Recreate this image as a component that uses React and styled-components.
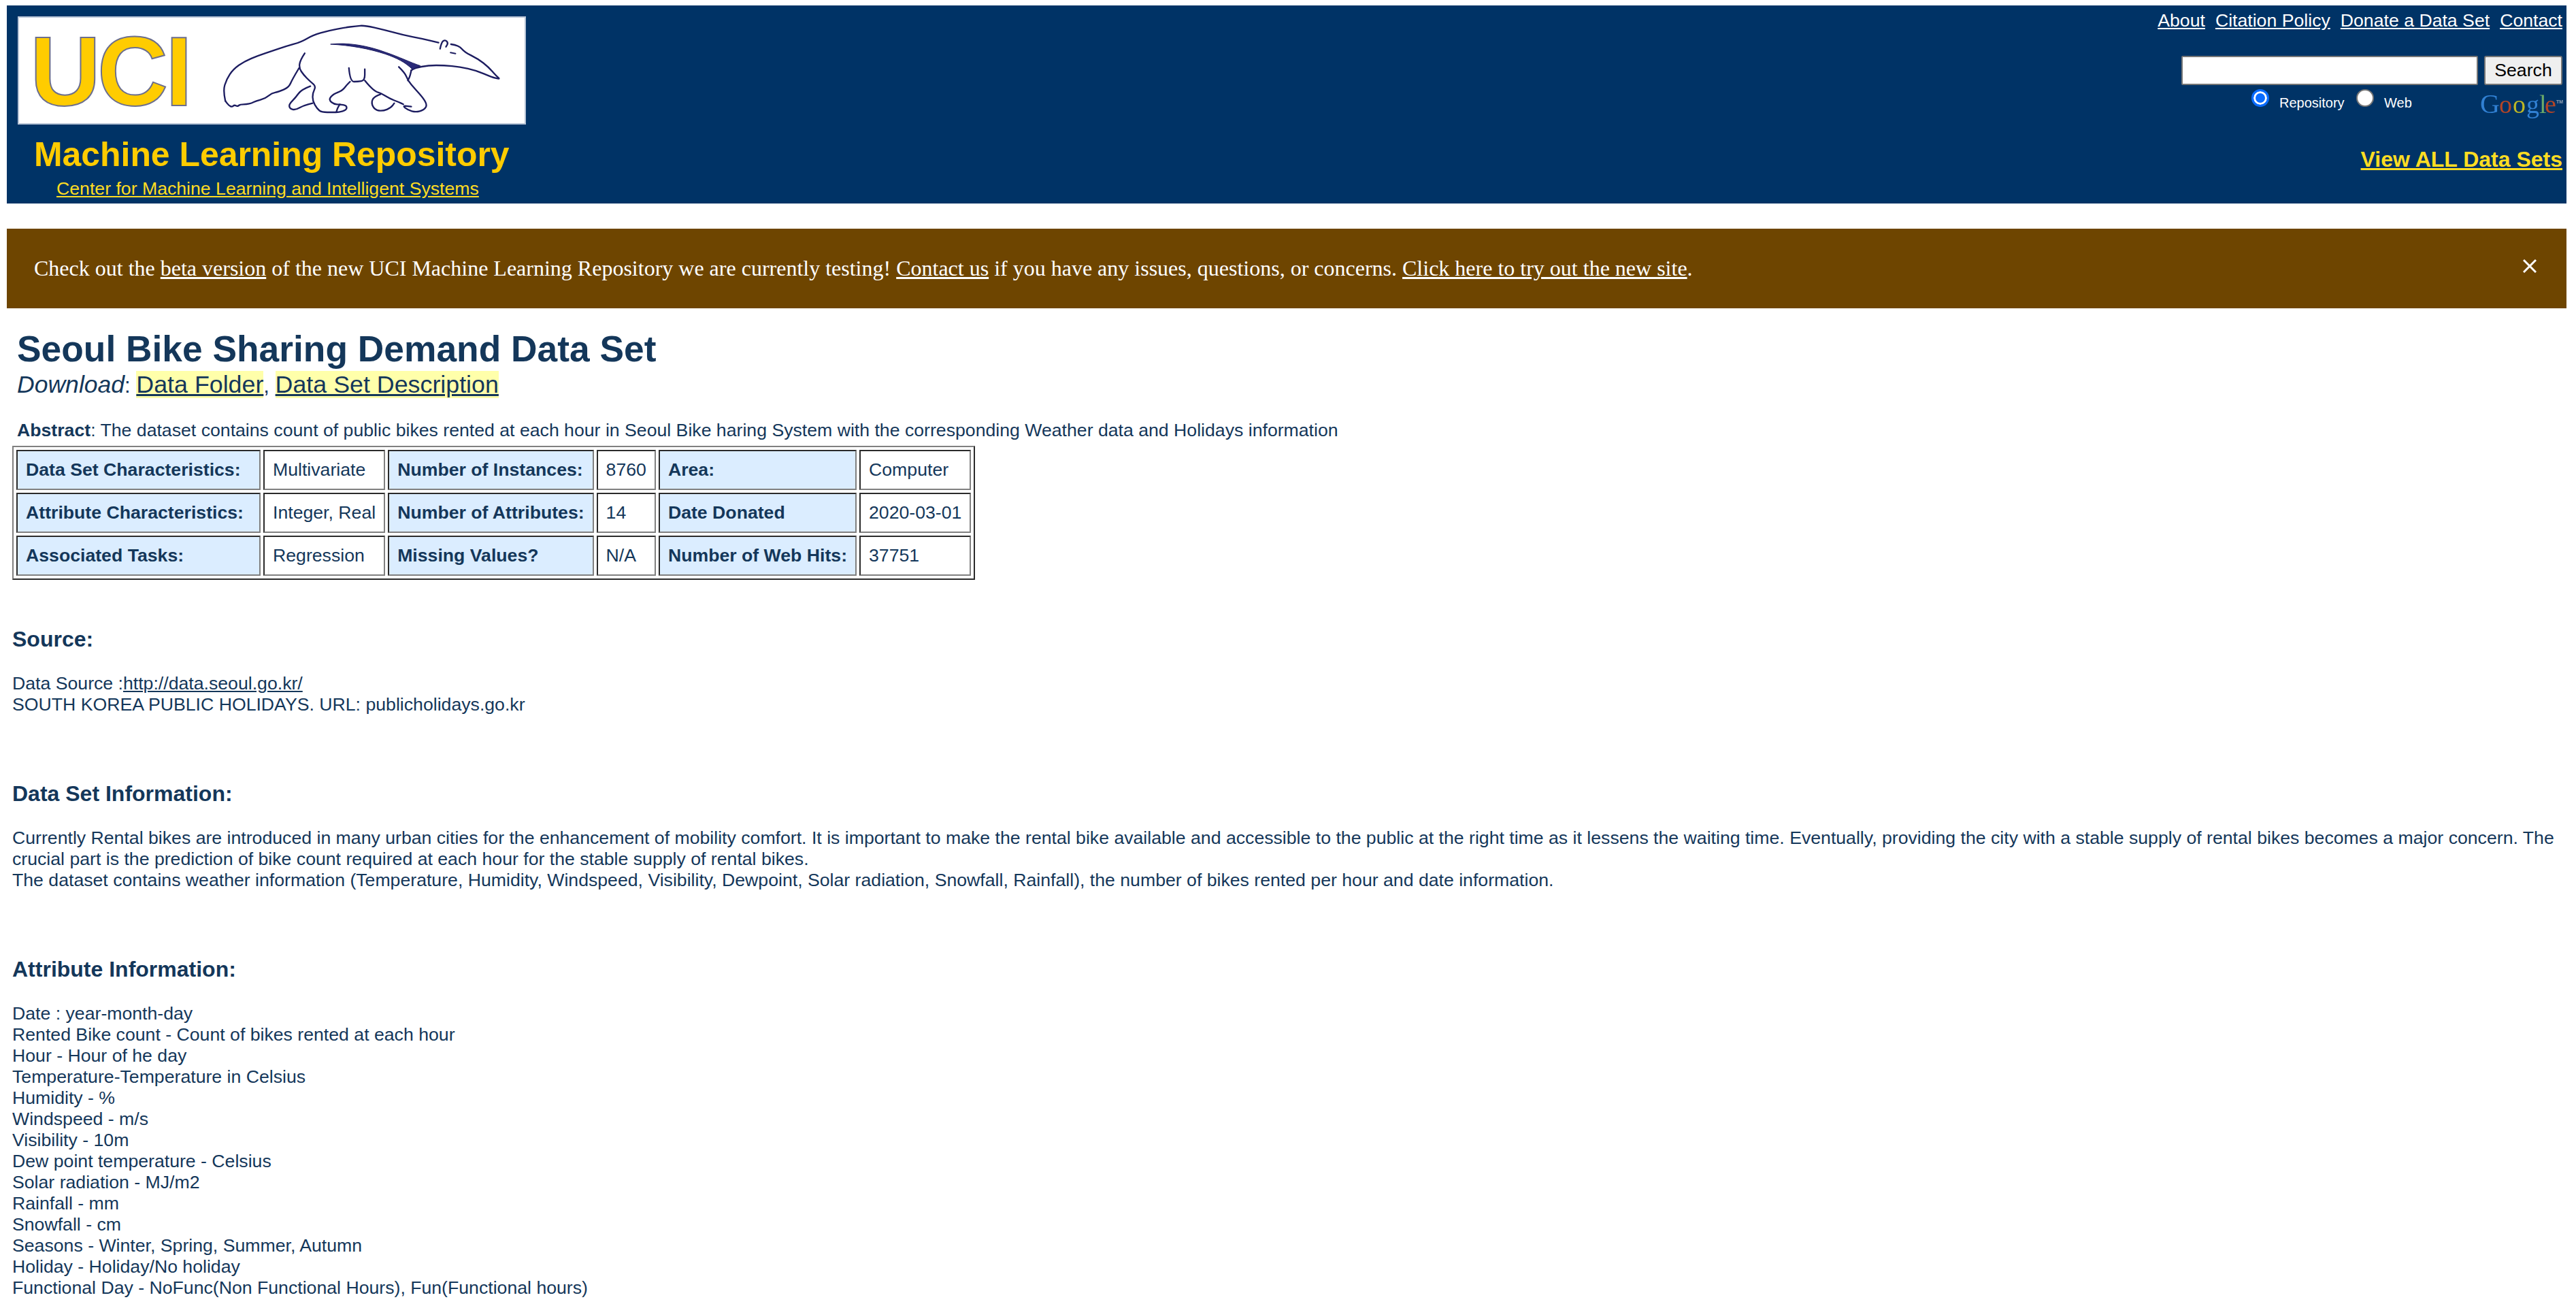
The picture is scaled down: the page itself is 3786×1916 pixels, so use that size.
import styled, { createGlobalStyle } from "styled-components";

const GlobalStyle = createGlobalStyle`
  html, body {
    margin: 0;
    padding: 0;
    background: #fff;
  }
  body {
    font-family: "Liberation Sans", Arial, sans-serif;
    color: #14375a;
  }
`;

const Page = styled.div`
  width: 3762px;
  height: 1908px;
  margin: 8px 14px 0 10px;
  overflow: hidden;
`;

const Header = styled.header`
  display: flex;
  justify-content: space-between;
  height: 291px;
  padding: 0 6px 0 16px;
  box-sizing: border-box;
  background: #003366;
`;

const Brand = styled.div`
  display: flex;
  flex-direction: column;
  width: 747px;
  padding-top: 16px;
`;

const LogoBox = styled.div`
  width: 747px;
  height: 159px;
  box-sizing: border-box;
  border: 2px solid #b8c4d6;
  background: #fff;
  svg {
    display: block;
    filter: blur(0.5px);
  }
`;

const RepoTitle = styled.div`
  margin-top: 16px;
  padding-left: 24px;
  font-size: 49.9px;
  line-height: 56px;
  font-weight: 700;
  color: #ffcc00;
  white-space: nowrap;
`;

const CenterLink = styled.a`
  margin-top: 6px;
  padding-left: 57px;
  font-size: 26.67px;
  line-height: 32px;
  color: #ffdd22;
  text-decoration: underline;
  white-space: nowrap;
`;

const Tools = styled.div`
  display: flex;
  flex-direction: column;
  align-items: flex-end;
  padding-top: 6px;
`;

const TopNav = styled.nav`
  display: flex;
  gap: 15px;
`;

const NavLink = styled.a`
  font-size: 26.67px;
  line-height: 32px;
  color: #fff;
  text-decoration: underline;
`;

const SearchRow = styled.div`
  display: flex;
  gap: 9px;
  margin-top: 36px;
`;

const SearchInput = styled.input`
  width: 436px;
  height: 43px;
  box-sizing: border-box;
  border: 2px solid #767676;
  border-radius: 2px;
  background: #fff;
`;

const SearchButton = styled.button`
  width: 115px;
  height: 43px;
  padding: 0;
  box-sizing: border-box;
  border: 2px solid #767676;
  border-radius: 3px;
  background: #efefef;
  color: #000;
  font-family: "Liberation Sans", Arial, sans-serif;
  font-size: 26.67px;
`;

const RadioRow = styled.div`
  display: flex;
  align-items: flex-start;
  width: 560px;
  margin-top: 6px;
  padding-left: 103px;
  box-sizing: border-box;
`;

const RadioDot = styled.span`
  flex: none;
  width: 26px;
  height: 26px;
  box-sizing: border-box;
  border-radius: 50%;
  background: ${(p) => (p.$on ? "#0a6cff" : "#fff")};
  border: ${(p) => (p.$on ? "3px solid #0a6cff" : "2px solid #767676")};
  box-shadow: ${(p) => (p.$on ? "inset 0 0 0 3px #fff" : "none")};
`;

const RadioLabel = styled.span`
  width: ${(p) => p.$w}px;
  margin: 7px 0 0 15px;
  font-size: 20px;
  line-height: 26px;
  color: #fff;
`;

const GoogleMark = styled.svg`
  flex: none;
  margin: 8px -1px 0 auto;
  overflow: visible;
  opacity: 0.85;
  filter: blur(0.4px);
`;

const AllSets = styled.a`
  margin-top: 34px;
  font-size: 32px;
  line-height: 38px;
  font-weight: 700;
  color: #ffdd22;
  text-decoration: underline;
`;

const Banner = styled.div`
  display: flex;
  justify-content: space-between;
  align-items: center;
  height: 117px;
  margin-top: 37px;
  padding: 0 44px 0 40px;
  box-sizing: border-box;
  background: #6e4500;
  color: #fff;
  font-family: "Liberation Serif", "Times New Roman", serif;
  font-size: 32px;
`;

const BannerLink = styled.a`
  color: #fff;
  text-decoration: underline;
`;

const CloseIcon = styled.svg`
  flex: none;
  align-self: flex-start;
  margin-top: 45px;
`;

const Main = styled.main`
  padding: 30px 8px 0;
`;

const Title = styled.h1`
  margin: 0;
  padding-left: 7px;
  font-size: 53.33px;
  line-height: 60px;
  font-weight: 700;
`;

const DownloadLine = styled.div`
  padding-left: 7px;
  font-size: 31px;
  line-height: 44px;
`;

const DownloadLabel = styled.i`
  font-size: 35.56px;
`;

const HighlightLink = styled.a`
  background: #ffffaa;
  color: inherit;
  font-size: 35.8px;
  text-decoration: underline;
`;

const Abstract = styled.p`
  margin: 28px 0 0;
  padding-left: 7px;
  font-size: 26.67px;
  line-height: 31px;
`;

const SpecTable = styled.table`
  margin-top: 7px;
  border-collapse: separate;
  border-spacing: 4px;
  border-style: solid;
  border-width: 2px;
  border-color: #808080 #2a2a2a #2a2a2a #808080;
  font-size: 26.67px;
`;

const Cell = styled.td`
  height: 59px;
  padding: 0 12px;
  box-sizing: border-box;
  border-style: solid;
  border-width: 2px;
  border-color: #2a2a2a #808080 #808080 #2a2a2a;
  white-space: nowrap;
  background: ${(p) => (p.$head ? "#dbedff" : "#fff")};
  font-weight: ${(p) => (p.$head ? 700 : 400)};
  &:first-child {
    width: 359px;
  }
`;

const SectionTitle = styled.h2`
  margin: ${(p) => p.$top}px 0 0;
  font-size: 32px;
  line-height: 38px;
  font-weight: 700;
`;

const Body = styled.p`
  margin: 31px 0 0;
  font-size: 26.67px;
  line-height: 31px;
`;

const InlineLink = styled.a`
  color: inherit;
  text-decoration: underline;
`;

const specRows = [
  ["Data Set Characteristics:", "Multivariate", "Number of Instances:", "8760", "Area:", "Computer"],
  ["Attribute Characteristics:", "Integer, Real", "Number of Attributes:", "14", "Date Donated", "2020-03-01"],
  ["Associated Tasks:", "Regression", "Missing Values?", "N/A", "Number of Web Hits:", "37751"],
];

const attributes = [
  "Date : year-month-day",
  "Rented Bike count - Count of bikes rented at each hour",
  "Hour - Hour of he day",
  "Temperature-Temperature in Celsius",
  "Humidity - %",
  "Windspeed - m/s",
  "Visibility - 10m",
  "Dew point temperature - Celsius",
  "Solar radiation - MJ/m2",
  "Rainfall - mm",
  "Snowfall - cm",
  "Seasons - Winter, Spring, Summer, Autumn",
  "Holiday - Holiday/No holiday",
  "Functional Day - NoFunc(Non Functional Hours), Fun(Functional hours)",
];

// anteater outline, points traced from the logo
const anteaterLines = [
  // back, snout top, head, snout underside
  [[65,385],[55,340],[70,290],[100,245],[150,210],[210,185],[270,165],[330,145],[400,125],[450,95],[520,75],[590,62],[640,55],[680,52],[760,70],[850,95],[930,110],[1005,128]],
  // ear
  [[1012,155],[1018,125],[1035,115],[1048,130],[1038,146]],
  [[1060,135],[1095,140],[1120,170],[1180,200],[1225,235],[1260,275],[1278,290],[1240,280],[1170,250],[1100,235],[1030,228],[960,228],[900,240],[885,250]],
  // chest and front leg
  [[830,235],[858,262],[870,295],[900,330],[940,375],[955,405],[940,425],[905,435],[870,425],[845,405],[885,410]],
  [[885,250],[880,275],[870,295]],
  // belly and near front leg
  [[610,240],[615,300],[650,300],[680,295],[680,245]],
  [[680,295],[700,320],[730,345],[750,350],[790,375],[830,390],[850,400]],
  [[750,355],[720,365],[708,395],[725,425],[760,430],[795,415],[810,395]],
  // hind leg
  [[415,175],[395,205],[390,240],[410,270],[440,300],[465,320],[450,350],[450,385],[470,420],[490,435],[540,435],[565,435],[600,425],[600,405],[570,400],[545,400],[520,380],[540,355],[580,340],[600,315],[615,300]],
  [[555,432],[560,415],[570,400]],
  // far hind leg
  [[440,320],[400,335],[375,370],[345,400],[350,420],[375,425],[410,405],[450,395]],
  // tail underside
  [[390,240],[360,290],[345,325],[300,345],[270,350],[240,375],[200,385],[180,395],[160,400],[130,400],[118,410],[105,402],[95,412],[80,405],[65,385]],
];

const smooth = (pts) => {
  let d = `M${pts[0][0]} ${pts[0][1]}`;
  for (let i = 1; i < pts.length - 1; i++) {
    const mx = (pts[i][0] + pts[i + 1][0]) / 2;
    const my = (pts[i][1] + pts[i + 1][1]) / 2;
    d += ` Q${pts[i][0]} ${pts[i][1]} ${mx} ${my}`;
  }
  const last = pts[pts.length - 1];
  return `${d} L${last[0]} ${last[1]}`;
};

function Logo() {
  return (
    <svg width="743" height="155" viewBox="0 0 743 155">
      <text
        x="16 115 215"
        y="129"
        fontFamily="Liberation Sans, Arial, sans-serif"
        fontWeight="700"
        fontSize="144"
        fill="#ffcc00"
        stroke="#6c6f8e"
        strokeWidth="2"
      >
        UCI
      </text>
      <g
        transform="translate(281.5 -6) scale(0.3333)"
        fill="none"
        stroke="#1c1c60"
        strokeWidth="7"
        strokeLinejoin="round"
        strokeLinecap="round"
      >
        {anteaterLines.map((pts) => (
          <path key={pts.join()} d={smooth(pts)} />
        ))}
        <path d="M530 135 C600 126 690 140 770 170 C830 190 880 215 925 230 L890 246 C860 215 820 195 770 178 C700 155 620 140 530 135 Z" fill="#2a2a78" strokeWidth="3" />
        <path d="M1058 172 L1080 176" strokeWidth="6" />
      </g>
    </svg>
  );
}

function GoogleLogo() {
  return (
    <GoogleMark width="122" height="42" viewBox="0 0 122 42">
      <g fontFamily="Liberation Serif, serif" fontSize="38">
        <text x="0" y="27" fontSize="40" fill="#3a8ee6">G</text>
        <text x="28" y="27" fill="#d4491c">o</text>
        <text x="48" y="27" fill="#e0cf1a">o</text>
        <text x="68" y="27" fill="#3a8ee6">g</text>
        <text x="87" y="27" fill="#7fc06a">l</text>
        <text x="95" y="27" fill="#d4491c">e</text>
      </g>
      <text x="112" y="13" fontFamily="Liberation Sans, sans-serif" fontSize="7" fontWeight="700" fill="#b0b8c4">TM</text>
    </GoogleMark>
  );
}

function App() {
  return (
    <>
      <GlobalStyle />
      <Page>
        <Header>
          <Brand>
            <LogoBox>
              <Logo />
            </LogoBox>
            <RepoTitle>Machine Learning Repository</RepoTitle>
            <CenterLink>Center for Machine Learning and Intelligent Systems</CenterLink>
          </Brand>
          <Tools>
            <TopNav>
              <NavLink>About</NavLink>
              <NavLink>Citation Policy</NavLink>
              <NavLink>Donate a Data Set</NavLink>
              <NavLink>Contact</NavLink>
            </TopNav>
            <SearchRow>
              <SearchInput />
              <SearchButton>Search</SearchButton>
            </SearchRow>
            <RadioRow>
              <RadioDot $on />
              <RadioLabel $w={113}>Repository</RadioLabel>
              <RadioDot />
              <RadioLabel $w={42}>Web</RadioLabel>
              <GoogleLogo />
            </RadioRow>
            <AllSets>View ALL Data Sets</AllSets>
          </Tools>
        </Header>
        <Banner>
          <span>
            Check out the <BannerLink>beta version</BannerLink> of the new UCI Machine Learning Repository we are currently testing! <BannerLink>Contact us</BannerLink> if you have any issues, questions, or concerns. <BannerLink>Click here to try out the new site</BannerLink>.
          </span>
          <CloseIcon width="20" height="20" viewBox="0 0 20 20" stroke="#fff" strokeWidth="3">
            <path d="M1 1 L19 19 M19 1 L1 19" />
          </CloseIcon>
        </Banner>
        <Main>
          <Title>Seoul Bike Sharing Demand Data Set</Title>
          <DownloadLine>
            <DownloadLabel>Download</DownloadLabel>: <HighlightLink>Data Folder</HighlightLink>, <HighlightLink>Data Set Description</HighlightLink>
          </DownloadLine>
          <Abstract>
            <b>Abstract</b>: The dataset contains count of public bikes rented at each hour in Seoul Bike haring System with the corresponding Weather data and Holidays information
          </Abstract>
          <SpecTable>
            <tbody>
              {specRows.map((row) => (
                <tr key={row[0]}>
                  {row.map((text, i) => (
                    <Cell key={text} $head={i % 2 === 0}>
                      {text}
                    </Cell>
                  ))}
                </tr>
              ))}
            </tbody>
          </SpecTable>
          <SectionTitle $top={68}>Source:</SectionTitle>
          <Body>
            Data Source :<InlineLink>http://data.seoul.go.kr/</InlineLink>
            <br />
            SOUTH KOREA PUBLIC HOLIDAYS. URL: publicholidays.go.kr
          </Body>
          <SectionTitle $top={96}>Data Set Information:</SectionTitle>
          <Body>
            Currently Rental bikes are introduced in many urban cities for the enhancement of mobility comfort. It is important to make the rental bike available and accessible to the public at the right time as it lessens the waiting time. Eventually, providing the city with a stable supply of rental bikes becomes a major concern. The crucial part is the prediction of bike count required at each hour for the stable supply of rental bikes.
            <br />
            The dataset contains weather information (Temperature, Humidity, Windspeed, Visibility, Dewpoint, Solar radiation, Snowfall, Rainfall), the number of bikes rented per hour and date information.
          </Body>
          <SectionTitle $top={96}>Attribute Information:</SectionTitle>
          <Body>
            {attributes.map((line) => (
              <span key={line}>
                {line}
                <br />
              </span>
            ))}
          </Body>
        </Main>
      </Page>
    </>
  );
}

export default App;
